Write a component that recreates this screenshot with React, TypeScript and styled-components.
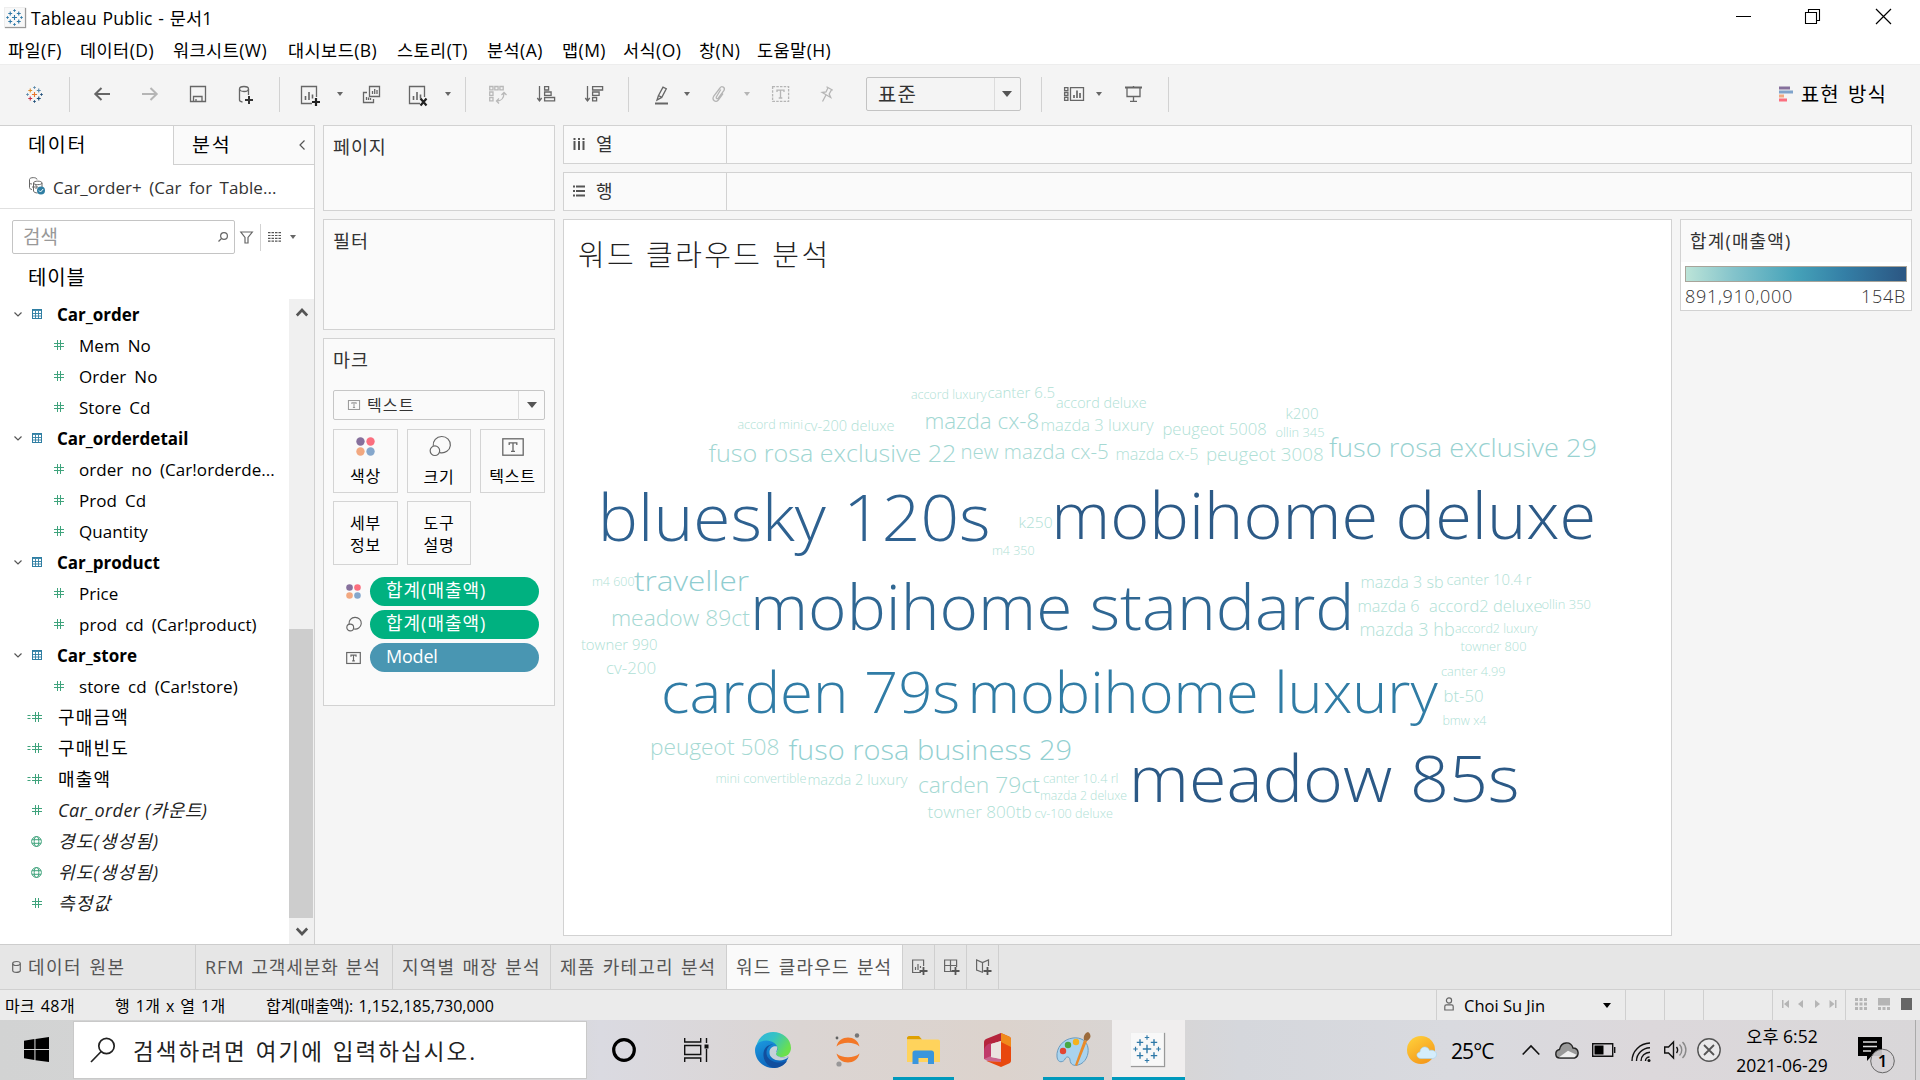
import React from 'react';
import styled, { createGlobalStyle, css } from 'styled-components';

const GlobalStyle = createGlobalStyle`
  *, *::before, *::after { box-sizing: border-box; }
  html, body { margin: 0; padding: 0; }
  body {
    width: 1920px;
    height: 1080px;
    overflow: hidden;
    background: #f5f5f5;
    color: #000;
    font-family: 'Open Sans', 'Noto Sans CJK KR', sans-serif;
    font-size: 17px;
    line-height: 1;
  }
`;

const Shell = styled.div`
  width: 1920px;
  height: 1080px;
  display: flex;
  flex-direction: column;
  overflow: hidden;
  background: #f5f5f5;
  white-space: nowrap;
`;

const Glyph = styled.svg<{ $ml?: number; $mt?: number }>`
  display: block;
  flex: none;
  margin-left: ${(p) => p.$ml ?? 0}px;
  margin-top: ${(p) => p.$mt ?? 0}px;
  overflow: visible;
`;

/* ---------- title bar and menu ---------- */

const TitleBar = styled.header`
  height: 34px;
  display: flex;
  align-items: center;
  padding: 0 29px 0 4px;
  background: #fff;
`;

const AppBadge = styled.span<{ $w: number; $h: number }>`
  width: ${(p) => p.$w}px;
  height: ${(p) => p.$h}px;
  flex: none;
  display: flex;
  align-items: center;
  justify-content: center;
  background: #f8f8f8;
  box-shadow: 1px 1px 1px #999;
  border: 1px solid #eee;
`;

const TitleText = styled.span`
  margin: 3px auto 0 6px;
  font-size: 17.5px;
  letter-spacing: 0.15px;
  word-spacing: 1px;
`;

const MenuBar = styled.nav`
  height: 30px;
  display: flex;
  align-items: center;
  gap: 17px;
  padding: 2px 0 0 8px;
  background: #fff;
`;

const MenuItem = styled.span<{ $w: number }>`
  width: ${(p) => p.$w}px;
  font-size: 17.5px;
  letter-spacing: 0.45px;
  line-height: 24px;
`;

/* ---------- toolbar ---------- */

const Toolbar = styled.div`
  height: 61px;
  flex: none;
  display: flex;
  align-items: center;
  padding: 0 33px 2px 26px;
  background: #f4f4f4;
  border-top: 1px solid #ededed;
`;

const ToolSep = styled.span<{ $ml: number; $h?: number }>`
  width: 1px;
  height: ${(p) => p.$h ?? 35}px;
  margin-left: ${(p) => p.$ml}px;
  background: #d2d2d2;
`;

const Caret = styled.span<{ $ml?: number; $s?: number; $c?: string }>`
  width: 0;
  height: 0;
  flex: none;
  margin-left: ${(p) => p.$ml ?? 0}px;
  border: ${(p) => p.$s ?? 3}px solid transparent;
  border-top-color: ${(p) => p.$c ?? '#666'};
  border-top-width: ${(p) => (p.$s ?? 3) + 1}px;
  border-bottom: 0;
`;

const FitSelect = styled.div`
  width: 155px;
  height: 34px;
  margin-left: 33px;
  display: flex;
  align-items: center;
  border: 1px solid #c3c3c3;
  border-radius: 2px;
  color: #333;
  font-size: 20px;
  letter-spacing: 1.2px;
  span:first-child { width: 128px; padding: 1px 0 0 11px; line-height: 31px; border-right: 1px solid #dcdcdc; }
`;

const ShowMe = styled.div`
  margin-left: auto;
  padding-top: 2px;
  display: flex;
  align-items: center;
  gap: 8px;
  font-size: 20px;
  letter-spacing: 1.1px;
  word-spacing: 2px;
`;

/* ---------- work area ---------- */

const Work = styled.main`
  height: 819px;
  display: flex;
`;

const DataPane = styled.aside`
  width: 315px;
  height: 819px;
  display: flex;
  flex-direction: column;
  background: #fff;
  border-top: 1px solid #d0d0d0;
  border-right: 1px solid #d0d0d0;
`;

const PaneTabs = styled.div`
  height: 39px;
  flex: none;
  display: flex;
  font-size: 19.5px;
  letter-spacing: 1.8px;
`;

const PaneTab = styled.div<{ $active?: boolean }>`
  display: flex;
  align-items: center;
  padding-bottom: 1px;
  ${(p) =>
    p.$active
      ? css`
          width: 173px;
          padding-left: 28px;
        `
      : css`
          flex: 1;
          padding-left: 18px;
          padding-right: 9px;
          justify-content: space-between;
          background: #fafafa;
          border-left: 1px solid #d0d0d0;
          border-bottom: 1px solid #d0d0d0;
        `}
`;

const Source = styled.div`
  height: 44px;
  flex: none;
  display: flex;
  align-items: center;
  gap: 8px;
  padding: 1px 0 0 29px;
  color: #333;
  border-bottom: 1px solid #e0e0e0;
  letter-spacing: 0.05px;
  word-spacing: 3px;
`;

const SearchRow = styled.div`
  height: 56px;
  flex: none;
  display: flex;
  align-items: center;
  padding-left: 12px;
`;

const SearchBox = styled.div`
  width: 223px;
  height: 34px;
  display: flex;
  align-items: center;
  justify-content: space-between;
  padding: 0 6px 0 10px;
  border: 1px solid #c4c4c4;
  border-radius: 2px;
  color: #999;
  font-size: 19px;
`;

const TablesTitle = styled.div`
  height: 34px;
  flex: none;
  padding: 3px 0 0 28px;
  font-size: 20px;
  line-height: 20px;
  letter-spacing: 0.9px;
`;

const TreeArea = styled.div`
  flex: 1;
  display: flex;
  min-height: 0;
`;

const Tree = styled.div`
  width: 289px;
`;

const Row = styled.div<{ $bold?: boolean; $italic?: boolean; $hangul?: boolean }>`
  height: 31px;
  display: flex;
  align-items: center;
  font-size: ${(p) => (p.$hangul ? 18 : 17)}px;
  font-weight: ${(p) => (p.$bold ? 700 : 400)};
  font-style: ${(p) => (p.$italic ? 'italic' : 'normal')};
  color: ${(p) => (p.$italic ? '#222' : '#000')};
  letter-spacing: ${(p) => (p.$hangul ? '1.2px' : p.$bold ? '0' : '0.05px')};
  word-spacing: ${(p) => (p.$hangul ? 0 : 3.5)}px;
`;

const RowIcons = styled.span<{ $w: number }>`
  width: ${(p) => p.$w}px;
  display: flex;
  align-items: center;
  justify-content: flex-end;
  margin-top: -1px;
`;

const RowText = styled.span<{ $pl: number; $up?: boolean; $tight?: boolean }>`
  padding-left: ${(p) => p.$pl}px;
  padding-bottom: ${(p) => (p.$up ? 2 : 0)}px;
  letter-spacing: ${(p) => (p.$tight ? '0.4px' : 'inherit')};
`;

const ScrollBar = styled.div`
  width: 25px;
  display: flex;
  flex-direction: column;
  align-items: center;
  padding: 9px 0 8px;
  background: #f0f0f0;
  svg:last-child { margin-top: auto; }
`;

const Thumb = styled.span`
  width: 24px;
  height: 289px;
  margin: 312px 1px 0 0;
  background: #cdcdcd;
`;

/* ---------- cards ---------- */

const Cards = styled.section`
  width: 232px;
  margin-left: 8px;
  display: flex;
  flex-direction: column;
  gap: 8px;
`;

const Card = styled.div<{ $h: number }>`
  height: ${(p) => p.$h}px;
  padding: 9px 9px 0;
  background: #fafafa;
  border: 1px solid #d2d2d2;
  color: #333;
`;

const CardTitle = styled.div`
  height: 23px;
  font-size: 18.5px;
  line-height: 23px;
  letter-spacing: 0.9px;
`;

const MarkSelect = styled.div`
  height: 30px;
  margin-top: 19px;
  display: flex;
  align-items: center;
  border: 1px solid #c6c6c6;
  border-radius: 2px;
  font-size: 16px;
  letter-spacing: 1.1px;
  span { flex: 1; padding-left: 7px; line-height: 29px; border-right: 1px solid #dcdcdc; }
`;

const MarkGrid = styled.div`
  display: grid;
  grid-template-columns: 65px 64px 65px;
  gap: 8px 9px;
  margin-top: 9px;
`;

const MarkButton = styled.div`
  height: 64px;
  display: flex;
  flex-direction: column;
  align-items: center;
  justify-content: center;
  gap: 9px;
  padding-top: 2px;
  border: 1px solid #d4d4d4;
  color: #000;
  font-size: 16px;
  letter-spacing: 0.7px;
  line-height: 22px;
  text-align: center;
  white-space: pre-line;
`;

const Pills = styled.div`
  display: flex;
  flex-direction: column;
  gap: 4px;
  margin-top: 12px;
  padding-left: 13px;
`;

const PillRow = styled.div`
  display: flex;
  align-items: center;
  height: 29px;
  gap: 9px;
`;

const Pill = styled.div<{ $color: string; $track: number }>`
  width: 169px;
  height: 29px;
  border-radius: 15px;
  padding-left: 16px;
  background: ${(p) => p.$color};
  color: #fff;
  font-size: 18px;
  line-height: 26px;
  letter-spacing: ${(p) => p.$track}px;
`;

/* ---------- shelves and view ---------- */

const Sheet = styled.section`
  width: 1349px;
  margin-left: 8px;
  display: flex;
  flex-direction: column;
  gap: 8px;
`;

const Shelf = styled.div`
  height: 39px;
  flex: none;
  background: #fafafa;
  border: 1px solid #d2d2d2;
  display: flex;
`;

const ShelfLabel = styled.div`
  width: 163px;
  display: flex;
  align-items: center;
  gap: 11px;
  padding: 0 0 1px 9px;
  border-right: 1px solid #d2d2d2;
  color: #333;
  font-size: 18px;
`;

const ViewRow = styled.div`
  display: flex;
  gap: 8px;
`;

const View = styled.div`
  width: 1109px;
  height: 717px;
  background: #fff;
  border: 1px solid #d2d2d2;
`;

const ViewTitle = styled.h1`
  height: 70px;
  margin: 0;
  padding: 17px 0 0 14px;
  font-size: 29px;
  font-weight: 300;
  line-height: 36px;
  letter-spacing: 2.4px;
  color: #222;
`;

const Cloud = styled.svg`
  display: block;
  font-family: 'Open Sans', 'Noto Sans', sans-serif;
  font-weight: 300;
`;

const Legend = styled.div`
  width: 232px;
  height: 92px;
  background: #fff;
  border: 1px solid #d2d2d2;
  color: #333;
`;

const LegendTitle = styled.div`
  height: 42px;
  padding-left: 9px;
  background: #fafafa;
  font-size: 18px;
  line-height: 43px;
  letter-spacing: 1.15px;
`;

const Ramp = styled.div`
  height: 16px;
  margin: 4px 4px 0;
  border: 1px solid #a8a49a;
  background: linear-gradient(90deg, #bce4d8 0%, #83c3cb 22%, #45a2b9 50%, #347fa6 72%, #2c5985 98%);
`;

const RampLabels = styled.div`
  display: flex;
  justify-content: space-between;
  padding: 4px 5px 0 4px;
  font-weight: 300;
  font-size: 18px;
  line-height: 20px;
  letter-spacing: 0.7px;
`;

/* ---------- sheet tabs and status ---------- */

const SheetTabs = styled.div`
  height: 46px;
  flex: none;
  display: flex;
  background: #e6e6e6;
  border-top: 1px solid #cdcdcd;
  border-bottom: 1px solid #d0d0d0;
`;

const SheetTab = styled.div<{ $w: number; $active?: boolean; $pl?: number; $track?: number }>`
  width: ${(p) => p.$w}px;
  display: flex;
  align-items: center;
  padding: 0 0 1px ${(p) => p.$pl ?? 9}px;
  gap: 7px;
  border-right: 1px solid #cfcfcf;
  background: ${(p) => (p.$active ? '#fafafa' : 'transparent')};
  color: #555;
  font-size: 18px;
  letter-spacing: ${(p) => p.$track ?? 1.15}px;
  word-spacing: 1.5px;
`;

const StatusBar = styled.div`
  height: 30px;
  flex: none;
  display: flex;
  align-items: center;
  padding-left: 5px;
  background: #ebebeb;
  font-size: 16px;
`;

const Status = styled.span<{ $w: number; $track?: number }>`
  width: ${(p) => p.$w}px;
  padding-top: 2px;
  line-height: 22px;
  word-spacing: 1px;
  letter-spacing: ${(p) => p.$track ?? 0}px;
`;

const StatusCell = styled.div<{ $w: number; $pl?: number }>`
  width: ${(p) => p.$w}px;
  height: 30px;
  display: flex;
  align-items: center;
  padding-left: ${(p) => p.$pl ?? 0}px;
  border-left: 1px solid #cfcfcf;
`;

const UserName = styled.span`
  width: 139px;
  margin-left: 10px;
  padding-top: 2px;
  font-size: 16.5px;
`;

/* ---------- taskbar ---------- */

const Taskbar = styled.footer`
  height: 60px;
  flex: none;
  display: flex;
  align-items: center;
  background: linear-gradient(90deg, #d2d3d3 0, #d8d8d9 560px, #dadae1 600px, #dbd5d3 800px, #dcd3cd 1000px, #d8d5d4 1150px, #d5d7dc 1240px, #d9dadf 1450px, #dcd8db 1650px, #d9d7d9 1920px);
`;

const StartButton = styled.div`
  width: 73px;
  padding-left: 24px;
`;

const TaskSearch = styled.div`
  width: 514px;
  height: 58px;
  display: flex;
  align-items: center;
  gap: 17px;
  padding-left: 16px;
  background: #fff;
  border: 1px solid #c9c9c9;
  color: #222;
  font-size: 22.5px;
  letter-spacing: 2.05px;
  word-spacing: 1px;
  span { padding-top: 4px; }
`;

const TaskButton = styled.div<{ $w: number; $ml?: number; $open?: boolean; $active?: boolean; $pt?: number }>`
  width: ${(p) => p.$w}px;
  height: 60px;
  margin-left: ${(p) => p.$ml ?? 0}px;
  display: flex;
  align-items: center;
  justify-content: center;
  background: ${(p) => (p.$active ? '#f0eeee' : 'transparent')};
  border-bottom: 3px solid ${(p) => (p.$open || p.$active ? '#0099bc' : 'transparent')};
  padding-top: ${(p) => p.$pt ?? 3}px;
  padding-right: ${(p) => (p.$active ? 3 : 0)}px;
`;

const Weather = styled.div`
  display: flex;
  align-items: center;
  gap: 14px;
  margin-left: 222px;
  font-size: 21px;
  letter-spacing: -0.9px;
  span { width: 56px; padding-top: 3px; }
`;

const Clock = styled.div`
  width: 100px;
  margin-left: 11px;
  padding-top: 1px;
  display: flex;
  flex-direction: column;
  align-items: center;
  font-size: 17.5px;
  line-height: 29px;
  letter-spacing: 0;
`;

const DesktopEdge = styled.span`
  width: 1px;
  height: 60px;
  margin: 0 4px 0 auto;
  background: #aaa;
`;

/* ---------- icons ---------- */

const plus = (x: number, y: number, r: number) => `M${x - r} ${y}h${2 * r}M${x} ${y - r}v${2 * r}`;

function TableauMark({ size, colors, weight = 1.3 }: { size: number; colors?: string[]; weight?: number }) {
  const c = colors ?? ['#2f79a8', '#2f79a8', '#2f79a8', '#2f79a8', '#2f79a8'];
  return (
    <Glyph width={size} height={size} viewBox="0 0 20 20" fill="none" strokeWidth={weight}>
      <path d={plus(10, 10, 3)} stroke={c[0]} />
      <path d={plus(5, 5.3, 2.3)} stroke={c[1]} />
      <path d={plus(15, 5.3, 2.3)} stroke={c[2]} />
      <path d={plus(5, 14.7, 2.3)} stroke={c[3]} />
      <path d={plus(15, 14.7, 2.3)} stroke={c[4]} />
      <path d={plus(10, 1.8, 1.6) + plus(1.8, 10, 1.6)} stroke={c[2]} strokeWidth={weight * 0.8} />
      <path d={plus(10, 18.2, 1.6) + plus(18.2, 10, 1.6)} stroke={c[4]} strokeWidth={weight * 0.8} />
    </Glyph>
  );
}

function Hash({ calc }: { calc?: boolean }) {
  return (
    <Glyph width={calc ? 15 : 10} height={10} viewBox={calc ? '-5 0 15 10' : '0 0 10 10'} fill="none" stroke="#3fa37c" strokeWidth={1}>
      <path d="M3.5 0v10M6.5 0v10M0 3.5h10M0 6.5h10" />
      {calc && <path d="M-4.5 3.5h3M-4.5 6.5h3" />}
    </Glyph>
  );
}

function Globe() {
  return (
    <Glyph width={11} height={11} viewBox="0 0 11 11" fill="none" stroke="#3fa37c">
      <circle cx={5.5} cy={5.5} r={4.9} />
      <ellipse cx={5.5} cy={5.5} rx={2.3} ry={4.9} />
      <path d="M1 3.7h9M1 7.3h9" />
    </Glyph>
  );
}

function TableIcon() {
  return (
    <Glyph $ml={10} width={10} height={10} viewBox="0 0 10 10" fill="none" stroke="#2f7ea3">
      <rect x={0.5} y={0.5} width={9} height={9} />
      <path d="M0 1.5h10M0 4.5h10M0 7h10M3.5 2v8M6.5 2v8" strokeWidth={0.9} />
    </Glyph>
  );
}

function Dots({ w }: { w: number }) {
  return (
    <Glyph width={w} height={w} viewBox="0 0 20 20">
      <circle cx={4.7} cy={4.7} r={4.4} fill="#86709c" />
      <circle cx={15.3} cy={4.7} r={4.4} fill="#fb6f7f" />
      <circle cx={4.7} cy={15.3} r={4.4} fill="#f2a880" />
      <circle cx={15.3} cy={15.3} r={4.4} fill="#85a7cc" />
    </Glyph>
  );
}

function SizeIcon({ w }: { w: number }) {
  return (
    <Glyph width={w} height={w} viewBox="0 0 22 22" fill="none" stroke="#666" strokeWidth={22 / w + 0.2}>
      <path d="M4.5 10.3A9 8.6 0 1 1 11.5 17.5" />
      <circle cx={6.2} cy={15.4} r={5} />
    </Glyph>
  );
}

function TextIcon({ w, h, c = '#666' }: { w: number; h: number; c?: string }) {
  return (
    <Glyph width={w} height={h} viewBox="0 0 22 18" fill="none" stroke={c} strokeWidth={22 / w + 0.3}>
      <rect x={0.8} y={0.8} width={20.4} height={16.4} />
      <path d="M7.2 7V4.8h7.6V7M11 4.8v8.6M9 13.4h4" />
    </Glyph>
  );
}

const Bars = ({ extra }: { extra: React.ReactNode }) => (
  <>
    <path d="M11 17.5H.5V.5h15V11" />
    <path d="M4.5 10v4M8 6v8M11.5 8.5v4" strokeWidth={1.6} />
    {extra}
  </>
);

/* ---------- data ---------- */

const menus: [string, number][] = [
  ['파일(F)', 55], ['데이터(D)', 76], ['워크시트(W)', 98], ['대시보드(B)', 92], ['스토리(T)', 73],
  ['분석(A)', 58], ['맵(M)', 44], ['서식(O)', 59], ['창(N)', 41], ['도움말(H)', 76],
];

type Node = { t: string; k: 'table' | 'field' | 'calc' | 'gen' | 'geo' };
const tree: Node[] = [
  { t: 'Car_order', k: 'table' },
  { t: 'Mem No', k: 'field' },
  { t: 'Order No', k: 'field' },
  { t: 'Store Cd', k: 'field' },
  { t: 'Car_orderdetail', k: 'table' },
  { t: 'order no (Car!orderde...', k: 'field' },
  { t: 'Prod Cd', k: 'field' },
  { t: 'Quantity', k: 'field' },
  { t: 'Car_product', k: 'table' },
  { t: 'Price', k: 'field' },
  { t: 'prod cd (Car!product)', k: 'field' },
  { t: 'Car_store', k: 'table' },
  { t: 'store cd (Car!store)', k: 'field' },
  { t: '구매금액', k: 'calc' },
  { t: '구매빈도', k: 'calc' },
  { t: '매출액', k: 'calc' },
  { t: 'Car_order (카운트)', k: 'gen' },
  { t: '경도(생성됨)', k: 'geo' },
  { t: '위도(생성됨)', k: 'geo' },
  { t: '측정값', k: 'gen' },
];

// label, left edge, right edge, baseline, font size, colour
type Word = [string, number, number, number, number, string];
const pale = '#b0dfd6';
const mint = '#a5d9d3';
const words: Word[] = [
  ['accord luxury', 911.5, 986, 399, 12, pale],
  ['canter 6.5', 988, 1054.5, 398.3, 15, pale],
  ['accord deluxe', 1056.5, 1146, 408.3, 14.5, pale],
  ['accord mini', 738, 802.5, 429.3, 12, pale],
  ['cv-200 deluxe', 804.5, 894, 431.3, 14.5, pale],
  ['mazda cx-8', 925, 1038.5, 429.3, 22, '#a2d8d3'],
  ['mazda 3 luxury', 1041, 1153, 431.3, 16, pale],
  ['peugeot 5008', 1163, 1266, 435, 16, pale],
  ['k200', 1286, 1318, 419.3, 15, pale],
  ['ollin 345', 1276, 1324, 437.3, 12.5, pale],
  ['fuso rosa exclusive 22', 709, 955.5, 462, 24, '#a0d6d2'],
  ['new mazda cx-5', 961, 1108, 459.3, 19.5, mint],
  ['mazda cx-5', 1116, 1198, 460.3, 16, pale],
  ['peugeot 3008', 1206.5, 1323, 461, 18, pale],
  ['fuso rosa exclusive 29', 1329.5, 1596, 457, 25.5, '#98d2d1'],
  ['bluesky 120s', 603, 988, 541, 64, '#2e6190'],
  ['mobihome deluxe', 1056.5, 1593.5, 539, 65, '#2c5a87'],
  ['k250', 1019, 1052, 528, 15, pale],
  ['m4 350', 992.5, 1034, 555, 12.5, pale],
  ['m4 600', 592.5, 634, 586, 12.5, pale],
  ['traveller', 634.5, 748, 590.7, 27, '#8fcdd0'],
  ['mobihome standard', 755, 1352, 629.7, 63, '#2f6793'],
  ['mazda 3 sb', 1361, 1443, 588, 16, pale],
  ['canter 10.4 r', 1447, 1531, 585, 14.5, pale],
  ['mazda 6', 1358, 1419, 611.7, 16, pale],
  ['accord2 deluxe', 1429.5, 1542, 611.7, 15.5, pale],
  ['ollin 350', 1542, 1590.5, 609.3, 12.5, pale],
  ['mazda 3 hb', 1360, 1454, 636, 18.5, pale],
  ['accord2 luxury', 1455.5, 1537, 633.3, 12.5, pale],
  ['towner 800', 1461, 1526, 651.3, 12.5, pale],
  ['meadow 89ct', 611.5, 749, 626, 21.5, mint],
  ['towner 990', 581.5, 657, 650, 14.5, pale],
  ['cv-200', 606.5, 655.5, 674, 15.5, pale],
  ['carden 79s', 665.5, 958, 713, 57, '#307ca6'],
  ['mobihome luxury', 972, 1435.5, 713, 57, '#307ca5'],
  ['canter 4.99', 1441.5, 1505, 676.3, 12.5, pale],
  ['bt-50', 1444, 1483, 702.3, 15.5, pale],
  ['bmw x4', 1443, 1486, 725.3, 12.5, pale],
  ['peugeot 508', 650.5, 778.5, 754.7, 22, mint],
  ['fuso rosa business 29', 789, 1071, 760, 27, '#93d0d1'],
  ['mini convertible', 716, 806, 783.3, 12, pale],
  ['mazda 2 luxury', 808, 907, 785, 14.5, pale],
  ['carden 79ct', 918.5, 1039, 793, 21.5, mint],
  ['canter 10.4 rl', 1043.5, 1118, 783.3, 12.5, pale],
  ['mazda 2 deluxe', 1040.5, 1126.5, 800.3, 12.5, pale],
  ['meadow 85s', 1134, 1517, 802, 65, '#2b5986'],
  ['towner 800tb', 928, 1031, 818, 15.5, pale],
  ['cv-100 deluxe', 1035, 1112.5, 818, 12.5, pale],
];

/* ---------- sections ---------- */

function MainToolbar() {
  const g = { fill: 'none', stroke: '#666', strokeWidth: 1.3 };
  return (
    <Toolbar>
      <TableauMark size={17} colors={['#e8762d', '#e0902c', '#5a87a8', '#c83048', '#1f4e79']} />
      <ToolSep $ml={26} />
      <Glyph $ml={24} width={16} height={14} {...g} strokeWidth={2}><path d="M16 7H1M7.5 1L1.3 7l6.2 6" /></Glyph>
      <Glyph $ml={32} width={16} height={14} {...g} stroke="#b5b5b5" strokeWidth={2}><path d="M0 7h15M8.5 1l6.2 6-6.2 6" /></Glyph>
      <Glyph $ml={32} width={16} height={16} {...g}><path d="M.5.5h15v15H.5zM3.5 15.5v-5h8.500v5M6 13v2.500" /></Glyph>
      <Glyph $ml={33} $mt={2} width={15} height={18} {...g}>
        <ellipse cx={5} cy={3} rx={4.5} ry={2.5} /><path d="M.5 3v11c0 1 1.500 1.800 3 2M9.500 3v6" />
        <path d="M10 10v8M6 14h8" stroke="#333" strokeWidth={2} />
      </Glyph>
      <ToolSep $ml={25} />
      <Glyph $ml={21} $mt={2} width={19} height={19} {...g}><Bars extra={<path d="M15 12v8M11 16h8" stroke="#222" strokeWidth={2.200} />} /></Glyph>
      <Caret $ml={17} />
      <Glyph $ml={20} width={17} height={17} {...g}><path d="M6.500.5h10v10h-10zM4 6.500H.5v10h10V13M9.500 5v3M11.700 3v5M14 4v4M3.500 11v3M5.500 11.500v2.500M7.500 12v2" /></Glyph>
      <Glyph $ml={29} $mt={2} width={19} height={19} {...g}><Bars extra={<path d="M11.500 12.500l6 7M17.500 12.500l-6 7" stroke="#222" strokeWidth={2.200} />} /></Glyph>
      <Caret $ml={17} />
      <ToolSep $ml={14} />
      <Glyph $ml={23} width={17} height={18} {...g} stroke="#b8b8b8">
        <path d="M.7 1.500h3.300v3.300H.7zM5.800 1.500h3.300v3.300H5.800zM10.900 1.500h3.300v3.300h-3.300zM.7 7h3.300v3.300H.7zM.7 12.500h3.300v3.300H.7z" />
        <path d="M15 8c0 5-3 8-7 8M12.500 10L15 7.500 17.500 10M10 13.500L7.500 16l2.500 2.500" />
      </Glyph>
      <Glyph $ml={31} width={18} height={16} {...g}>
        <path d="M2.500 0v15M.3 12l2.200 3 2.200-3M7.600.7h4v3.300h-4zM7.600 6h6.500v3.300H7.600zM7.600 11.500h10v3.300h-10z" />
      </Glyph>
      <Glyph $ml={30} width={18} height={16} {...g}>
        <path d="M2.500 0v15M.3 12l2.200 3 2.200-3M7.600.7h10v3.300h-10zM7.600 6h6.500v3.300H7.600zM7.600 11.500h4v3.300h-4z" />
      </Glyph>
      <ToolSep $ml={25} />
      <Glyph $ml={26} $mt={2} width={13} height={19} {...g}>
        <path d="M3.500 9.500L8 1.200l3.300 1.500-4.500 8.600zM3.500 9.500l-1.500 4.500 4.700-2.600" /><path d="M0 17.500h13" strokeWidth={2} />
      </Glyph>
      <Caret $ml={16} />
      <Glyph $ml={22} width={13} height={16} {...g} stroke="#b5b5b5">
        <path d="M8.800 3.500L4.300 11c-.6 1.500 1.300 2.300 2 1L12 4.500C13.500 1.500 9.800-.8 8 2L1.800 10c-2.500 4 2.200 7.200 4.500 4L11 7.500" />
      </Glyph>
      <Caret $ml={19} $c="#b5b5b5" />
      <Glyph $ml={22} width={17} height={16} {...g} stroke="#b5b5b5">
        <rect x={0.6} y={0.6} width={16} height={14.800} strokeDasharray="2.500 1.200" /><path d="M5 6V4.200h7V6M8.500 4.200V12M6.700 12h3.600" />
      </Glyph>
      <Glyph $ml={32} width={12} height={16} {...g} stroke="#b5b5b5">
        <path d="M5.500.8l6.300 3.500M7 1.700L5 6 1.200 6.500l8.500 5-1.500-3.500 2.400-4.400M5 9l-3.500 6.500" />
      </Glyph>
      <FitSelect><span>표준</span><Caret $ml={7} $s={5} $c="#555" /></FitSelect>
      <ToolSep $ml={20} />
      <Glyph $ml={22} width={20} height={14} {...g}>
        <path d="M.6.6h3.300v3H.6zM.6 5.500h3.300v3H.6zM.6 10.400h3.300v3H.6zM6.500.6h13v12.800h-13z" /><path d="M10 8v3M13 3.500V11M16 6v5" strokeWidth={1.700} />
      </Glyph>
      <Caret $ml={12} />
      <Glyph $ml={23} width={17} height={16} {...g}>
        <path d="M0 1.500h17" strokeWidth={2} /><path d="M2 2v8.500h13V2M8.500 10.500V15M5 15.300h7M8.500 0v1" />
      </Glyph>
      <ToolSep $ml={26} />
      <ShowMe>
        <Glyph $mt={-2} width={14} height={16}>
          <path d="M0 .5h11v3H0z" fill="#86709c" /><path d="M0 4.500h14v3H0z" fill="#7fa3cb" /><path d="M0 8.500h5v3H0z" fill="#f2a880" /><path d="M0 12.500h8v3H0z" fill="#fb6f7f" />
        </Glyph>
        <span>표현 방식</span>
      </ShowMe>
    </Toolbar>
  );
}

function TreeRow({ t, k }: Node) {
  if (k === 'table') {
    return (
      <Row $bold>
        <RowIcons $w={42}>
          <Glyph width={8} height={5} fill="none" stroke="#555" strokeWidth={1.2}><path d="M.5.5L4 4 7.500.5" /></Glyph>
          <TableIcon />
        </RowIcons>
        <RowText $pl={15}>{t}</RowText>
      </Row>
    );
  }
  const field = k === 'field';
  return (
    <Row $italic={k === 'gen' || k === 'geo'} $hangul={!field}>
      <RowIcons $w={field ? 64 : 42}>{k === 'geo' ? <Globe /> : <Hash calc={k === 'calc'} />}</RowIcons>
      <RowText $pl={field ? 15 : 16} $up={!field} $tight={t.startsWith('Car_')}>{t}</RowText>
    </Row>
  );
}

function LeftPane() {
  return (
    <DataPane>
      <PaneTabs>
        <PaneTab $active>데이터</PaneTab>
        <PaneTab>
          <span>분석</span>
          <Glyph width={6} height={10} fill="none" stroke="#555" strokeWidth={1.2}><path d="M5.500.5L1 5l4.500 4.500" /></Glyph>
        </PaneTab>
      </PaneTabs>
      <Source>
        <Glyph $mt={-3} width={16} height={18} fill="none" stroke="#666">
          <path d="M.5 2.500v8c0 1 1 1.800 2.500 2M.5 2.500C.5 0 8 0 8 2.500M.5 5.500c0 1 1 1.500 2.500 1.500" />
          <path d="M4.500 6v8c0 1 2 2 4 2M4.500 6c0-2.500 8.500-2.500 8.500 0v4M4.500 6c0 2.200 8.500 2.200 8.500 0M3 10h5M6.500 8L8.500 10l-2 2" />
          <circle cx={12} cy={13.500} r={4} fill="#2f7ea3" stroke="none" />
          <path d="M10 13.500l1.500 1.500 2.700-3" stroke="#fff" />
        </Glyph>
        <span>Car_order+ (Car for Table...</span>
      </Source>
      <SearchRow>
        <SearchBox>
          <span>검색</span>
          <Glyph width={10} height={10} fill="none" stroke="#666" strokeWidth={1.2}><circle cx={6} cy={4} r={3.400} /><path d="M3.500 6.500L.5 9.500" /></Glyph>
        </SearchBox>
        <Glyph $ml={5} width={13} height={13} fill="none" stroke="#666" strokeWidth={1.2}><path d="M.8 1h11.500L8 6.500v5.500H5V6.500z" /></Glyph>
        <ToolSep $ml={7} $h={27} />
        <Glyph $ml={7} $mt={-1} width={13} height={10} stroke="#555" strokeWidth={1.200} strokeDasharray="2.500 1"><path d="M0 .7h13M0 3.500h13M0 6.300h13M0 9.200h13" /></Glyph>
        <Caret $ml={9} $s={3.5} />
      </SearchRow>
      <TablesTitle>테이블</TablesTitle>
      <TreeArea>
        <Tree>{tree.map((n) => <TreeRow key={n.t} {...n} />)}</Tree>
        <ScrollBar>
          <Glyph width={12} height={9} fill="none" stroke="#555" strokeWidth={2.600}><path d="M.8 7.500L6 2l5.200 5.500" /></Glyph>
          <Thumb />
          <Glyph width={12} height={9} fill="none" stroke="#555" strokeWidth={2.600}><path d="M.8 1.500L6 7l5.200-5.500" /></Glyph>
        </ScrollBar>
      </TreeArea>
    </DataPane>
  );
}

function CardColumn() {
  return (
    <Cards>
      <Card $h={86}><CardTitle>페이지</CardTitle></Card>
      <Card $h={111}><CardTitle>필터</CardTitle></Card>
      <Card $h={368}>
        <CardTitle>마크</CardTitle>
        <MarkSelect>
          <Glyph $ml={14} width={12} height={10} viewBox="0 0 22 18" fill="none" stroke="#999" strokeWidth={1.9}>
            <rect x={0.8} y={0.8} width={20.4} height={16.4} /><path d="M7.200 7V4.800h7.600V7M11 4.800v8.600M9 13.400h4" />
          </Glyph>
          <span>텍스트</span>
          <Glyph $ml={8} width={17} height={6}><path d="M0 0h10L5 6z" fill="#555" /></Glyph>
        </MarkSelect>
        <MarkGrid>
          <MarkButton><Dots w={19} />색상</MarkButton>
          <MarkButton><SizeIcon w={21} />크기</MarkButton>
          <MarkButton><TextIcon w={22} h={18} />텍스트</MarkButton>
          <MarkButton>{'세부\n정보'}</MarkButton>
          <MarkButton>{'도구\n설명'}</MarkButton>
        </MarkGrid>
        <Pills>
          <PillRow><Dots w={15} /><Pill $color="#00b180" $track={1}>합계(매출액)</Pill></PillRow>
          <PillRow><SizeIcon w={15} /><Pill $color="#00b180" $track={1}>합계(매출액)</Pill></PillRow>
          <PillRow><TextIcon w={15} h={12} /><Pill $color="#4996b2" $track={-0.2}>Model</Pill></PillRow>
        </Pills>
      </Card>
    </Cards>
  );
}

function WordCloud() {
  return (
    <Cloud width={1107} height={645} viewBox="564 290 1107 645">
      {words.map(([label, left, right, base, size, color]) => {
        const bearing = size > 50 ? size * 0.08 : 0.6;
        return (
          <text
            key={label}
            x={left - bearing}
            y={base}
            fontSize={size}
            fill={color}
            textLength={right - left + bearing + size * 0.04}
            lengthAdjust="spacingAndGlyphs"
          >
            {label}
          </text>
        );
      })}
    </Cloud>
  );
}

function SheetArea() {
  return (
    <Sheet>
      <Shelf>
        <ShelfLabel>
          <Glyph width={12} height={12} fill="#555"><path d="M.5 0h2v2h-2zM.5 3h2v9h-2zM5 0h2v2H5zM5 3h2v9H5zM9.500 0h2v2h-2zM9.500 3h2v9h-2z" /></Glyph>
          열
        </ShelfLabel>
      </Shelf>
      <Shelf>
        <ShelfLabel>
          <Glyph width={12} height={12} fill="#555"><path d="M0 .5h2v2H0zM3 .5h9v2H3zM0 5h2v2H0zM3 5h9v2H3zM0 9.500h2v2H0zM3 9.500h9v2H3z" /></Glyph>
          행
        </ShelfLabel>
      </Shelf>
      <ViewRow>
        <View>
          <ViewTitle>워드 클라우드 분석</ViewTitle>
          <WordCloud />
        </View>
        <Legend>
          <LegendTitle>합계(매출액)</LegendTitle>
          <Ramp />
          <RampLabels><span>891,910,000</span><span>154B</span></RampLabels>
        </Legend>
      </ViewRow>
    </Sheet>
  );
}

function Bottom() {
  const s = { fill: 'none', stroke: '#666', strokeWidth: 1.2 };
  const add = <path d="M11.500 8v8M7.500 12h8" strokeWidth={1.800} stroke="#555" />;
  return (
    <>
      <SheetTabs>
        <SheetTab $w={196} $pl={12} $track={1.4}>
          <Glyph width={9} height={12} {...s}><ellipse cx={4.500} cy={2.500} rx={3.800} ry={2} /><path d="M.7 2.500v7c0 2.500 7.600 2.500 7.600 0v-7" /></Glyph>
          데이터 원본
        </SheetTab>
        <SheetTab $w={197} $track={0.9}>RFM 고객세분화 분석</SheetTab>
        <SheetTab $w={158}>지역별 매장 분석</SheetTab>
        <SheetTab $w={176}>제품 카테고리 분석</SheetTab>
        <SheetTab $w={176} $active>워드 클라우드 분석</SheetTab>
        <SheetTab $w={32}><Glyph width={16} height={16} {...s}><path d="M9 13.500H.6V1h11v6M3.500 8v3M6 5v6M8.500 7v2" />{add}</Glyph></SheetTab>
        <SheetTab $w={32}><Glyph width={16} height={16} {...s}><path d="M8 12.500H.6V1h12v7M.6 6.500h12M6.500 1v11.500" />{add}</Glyph></SheetTab>
        <SheetTab $w={32}><Glyph width={16} height={16} {...s}><path d="M7 13.500L.6 11V1l5.900 2.500L12.500 1v6M6.500 3.500v10" />{add}</Glyph></SheetTab>
      </SheetTabs>
      <StatusBar>
        <Status $w={110} $track={0.4}>마크 48개</Status>
        <Status $w={151} $track={0.4}>행 1개 x 열 1개</Status>
        <Status $w={1170}>합계(매출액): 1,152,185,730,000</Status>
        <StatusCell $w={189} $pl={7}>
          <Glyph width={10} height={14} $mt={-2} {...s}><circle cx={5} cy={3.500} r={2.600} /><path d="M.8 13V9.500c0-1 .6-1.700 1.500-1.700h5.400c.9 0 1.500.7 1.500 1.700V13z" /></Glyph>
          <UserName>Choi Su Jin</UserName>
          <Caret $s={4} $c="#000" />
        </StatusCell>
        <StatusCell $w={39} />
        <StatusCell $w={39} />
        <StatusCell $w={69} />
        <StatusCell $w={73} $pl={9}>
          <Glyph $mt={-2} width={55} height={8} fill="#b5b5b5"><path d="M0 0h1.500v8H0zM7 0v8L2 4zM21 0v8l-5-4zM33 0v8l5-4zM47.500 0v8l5-4zM53 0h1.500v8H53z" /></Glyph>
        </StatusCell>
        <StatusCell $w={75} $pl={9}>
          <Glyph $mt={-2} width={57} height={12} fill="#b5b5b5">
            <path d="M0 0h3v3H0zM4.500 0h3v3h-3zM9 0h3v3H9zM0 4.500h3v3H0zM4.500 4.500h3v3h-3zM9 4.500h3v3H9zM0 9h3v3H0zM4.500 9h3v3h-3zM9 9h3v3H9z" />
            <path d="M23 0h12v7.500H23zM23 9h3v3h-3zM27.500 9h3v3h-3zM32 9h3v3h-3z" />
            <path d="M46 0h11v12H46z" fill="#666" />
          </Glyph>
        </StatusCell>
      </StatusBar>
    </>
  );
}

function WindowsTaskbar() {
  const k = { fill: 'none', stroke: '#111', strokeWidth: 1.4 };
  return (
    <Taskbar>
      <StartButton>
        <Glyph $mt={-1} width={25} height={25} viewBox="0 0 24 24"><path d="M0 3.500l10-1.500v9.500H0zM11 1.800L24 0v11.500H11zM0 12.500h10V22L0 20.500zM11 12.500h13V24l-13-1.800z" /></Glyph>
      </StartButton>
      <TaskSearch>
        <Glyph width={26} height={26} fill="none" stroke="#222" strokeWidth={1.7}><circle cx={16.500} cy={9} r={7.700} /><path d="M11.200 14.500L1 25" /></Glyph>
        <span>검색하려면 여기에 입력하십시오.</span>
      </TaskSearch>
      <TaskButton $w={72} $ml={1}><Glyph width={26} height={26} fill="none" stroke="#000" strokeWidth={3.200}><circle cx={13} cy={13} r={10.300} /></Glyph></TaskButton>
      <TaskButton $w={72}>
        <Glyph width={25} height={24} {...k}><path d="M.7 0v4h16V0M.7 24v-4h16v4M.7 7.500h16v9H.7zM22.500 0v5M22.500 11v13" /><path d="M20.500 6.500h4v4h-4z" fill="#111" stroke="none" /></Glyph>
      </TaskButton>
      <TaskButton $w={82} $pt={3}>
        <Glyph width={36} height={36} viewBox="0 0 36 36">
          <defs>
            <linearGradient id="edgeTop" x1="0" y1="0" x2="1" y2="0.5"><stop offset="0" stopColor="#2fb3e0" /><stop offset="0.5" stopColor="#35c3c4" /><stop offset="1" stopColor="#6be04c" /></linearGradient>
            <linearGradient id="edgeLow" x1="0" y1="0" x2="0.6" y2="1"><stop offset="0" stopColor="#1c9be0" /><stop offset="1" stopColor="#0b5fb8" /></linearGradient>
          </defs>
          <path d="M1 15C3 5 10 0 18 0c10 0 18 7 18 16 0 5-4 9-9 9-4 0-7-1.500-6-3.500 3-3 .5-9.500-6-9.500C9 12 3 13 1 15z" fill="url(#edgeTop)" />
          <path d="M0 18C0 12 5 8.500 11 8.500c7 0 12 4 11.500 9-.3 2-1.500 2.500-1.500 4 0 2 3 4 7 4 3 0 5-1 5.500-.5C31 32 25 36 18 36 8 36 0 28 0 18z" fill="url(#edgeLow)" />
          <path d="M11.500 21c0-5 3-8.500 7-8.500-3-.5-9 1-10 8.500-.8 7 4 14 11 15 5 0 10-3 12.500-7-9 4-20.500 0-20.500-8z" fill="#124f9e" />
          <path d="M22 14.500c1 3-1 4.500-1 7 0 2 3 4 7 4 3 0 5-1 5.500-.5C28 31 14 29 14.500 20c.2-3.500 3-6.500 7.500-5.500z" fill="#d9dbdc" opacity="0.9" />
        </Glyph>
      </TaskButton>
      <TaskButton $w={60} $ml={4}>
        <Glyph width={28} height={34} viewBox="0 0 28 34">
          <path d="M2.500 13.500C5 1.500 23 1.500 25.500 13.500 20 8.500 8 8.500 2.500 13.500zM2.500 20.500c2.500 12 20.500 12 23 0C20 25.500 8 25.500 2.500 20.500z" fill="#f37726" />
          <circle cx={23} cy={2.500} r={2.200} fill="#767677" /><circle cx={5} cy={31} r={2.600} fill="#989798" /><circle cx={3} cy={5} r={1.400} fill="#616262" />
        </Glyph>
      </TaskButton>
      <TaskButton $w={61} $ml={15} $open>
        <Glyph width={33} height={28} viewBox="0 0 33 28">
          <path d="M0 2c0-1 .8-2 2-2h10l3 3.500H0z" fill="#dfa000" /><path d="M0 3.500h31c1.200 0 2 .8 2 2V26H0z" fill="#ffd35c" />
          <path d="M5.500 28V17c0-1.500 1-2.500 2.500-2.500h16.500c1.500 0 2.500 1 2.500 2.500v11h-6v-6H11.500v6z" fill="#3a96dd" />
        </Glyph>
      </TaskButton>
      <TaskButton $w={60} $ml={13}>
        <Glyph width={27} height={34} viewBox="0 0 27 34">
          <path d="M17 0L2 6c-1.500.8-2 2-2 3.500V26l7-3V11l10-3z" fill="#b5243c" />
          <path d="M0 26l4.500 2.500L17 29v-3L7 24V10C3 11 0 14 0 18z" fill="#c4427a" opacity="0.75" />
          <path d="M17 0l8 3.500c1.500.7 2 1.500 2 3v21c0 1.500-.5 2.300-2 3L17 34 2.500 28 17 29z" fill="#e8480e" />
          <path d="M17 0l8 3.500c1.500.7 2 1.500 2 3V14L17 9z" fill="#f08a1c" />
          <path d="M7 11l10-3v18L7 24z" fill="#ebe4e0" />
        </Glyph>
      </TaskButton>
      <TaskButton $w={61} $ml={16} $open $pt={2}>
        <Glyph width={36} height={36} viewBox="0 0 36 36">
          <path d="M17 6C7 7 0 16 1 25c.8 7 7 5 8 2 1.500-3.500 5-2 5 1 .5 5 4 6 8 5 8-2 11-11 10-17C31 9 25 5 17 6z" fill="#a9d3ee" stroke="#6a9cc0" />
          <circle cx={7} cy={19} r={3.200} fill="#e24634" /><circle cx={12} cy={13} r={3.200} fill="#48a843" /><circle cx={20} cy={10} r={3.200} fill="#f5b21c" />
          <path d="M28 8l3 1-10 25-2-1z" fill="#e98b2a" /><path d="M28 8c-1-4 1-7 4-8 3 2 4 6-1 9z" fill="#9c6b3c" />
        </Glyph>
      </TaskButton>
      <TaskButton $w={73} $ml={8} $active $pt={1}>
        <AppBadge $w={34} $h={34}><TableauMark size={28} weight={1} /></AppBadge>
      </TaskButton>
      <Weather>
        <Glyph width={30} height={30} viewBox="0 0 30 30">
          <defs><linearGradient id="sun" x1="0" y1="0" x2="0.6" y2="1"><stop offset="0" stopColor="#ffd33d" /><stop offset="1" stopColor="#f59a1b" /></linearGradient></defs>
          <circle cx={14} cy={15} r={14} fill="url(#sun)" />
          <path d="M14 23.500c-5 0-5.500-6-1-6.500 0-6 8-7 9.500-1.500 3-1 7 .5 7 4 0 2.500-2 4-4 4z" fill="#d4edfc" stroke="#a8d4f0" strokeWidth={0.6} />
        </Glyph>
        <span>25°C</span>
      </Weather>
      <Glyph $ml={15} width={18} height={10} {...k} strokeWidth={1.6}><path d="M.7 9.500L9 1l8.300 8.500" /></Glyph>
      <Glyph $ml={15} width={24} height={17} viewBox="0 0 24 17">
        <path d="M5 16C-.5 16-.5 8.500 4.500 7.500 6-1 16-1 18 6c6 0 7 8 1.500 10z" fill="#999" stroke="#222" strokeWidth={1.400} /><path d="M4 15.300l9-6.500 8.500 4-2 2.500z" fill="#eee" />
      </Glyph>
      <Glyph $ml={13} width={24} height={14} {...k}><path d="M.7.7h20v12.600h-20zM22.700 4v6" /><path d="M2.500 2.500h9v9h-9z" fill="#000" stroke="none" /></Glyph>
      <Glyph $ml={15} $mt={3} width={20} height={20} {...k}><path d="M1 19C1 9 9 1.500 19 1M5.500 19C5.500 11.500 11.500 6 19 5.700M10 19c0-5 4-8.500 9-8.700" /><path d="M14.500 19c0-2.500 2-4 4-4" /><circle cx={18} cy={18.500} r={1.500} fill="#111" stroke="none" /></Glyph>
      <Glyph $ml={13} width={23} height={18} {...k}><path d="M.7 6h3.800l5-5v16l-5-5H.7z" /><path d="M12.500 6c1.300 1.700 1.300 4.300 0 6" /><path d="M15.500 3.500c3 3 3 8 0 11M18.500 1c4.500 4.500 4.500 11.500 0 16" stroke="#888" /></Glyph>
      <Glyph $ml={10} width={24} height={24} fill="none" stroke="#555" strokeWidth={1.400}><circle cx={12} cy={12} r={11.200} fill="#e9e9ea" /><path d="M7 7l10 10M17 7L7 17" strokeWidth={1.800} /></Glyph>
      <Clock><span>오후 6:52</span><span>2021-06-29</span></Clock>
      <Glyph $ml={26} $mt={11} width={37} height={37} viewBox="0 0 37 37">
        <path d="M0 0h24v19H13.500l-4.500 5v-5H0z" fill="#000" /><path d="M5 5h14M5 9.500h14M5 14h8" stroke="#ddd" strokeWidth={1.400} />
        <circle cx={24.500} cy={24} r={11.800} fill="#d5d3d5" fillOpacity={0.9} stroke="#666" />
        <text x={24.500} y={30} textAnchor="middle" fontSize={17} fontWeight={600}>1</text>
      </Glyph>
      <DesktopEdge />
    </Taskbar>
  );
}

export default function App() {
  return (
    <Shell>
      <GlobalStyle />
      <TitleBar>
        <AppBadge $w={21} $h={20}><TableauMark size={17} /></AppBadge>
        <TitleText>Tableau Public - 문서1</TitleText>
        <Glyph $mt={-1} width={15} height={1}><path d="M0 .5h15" stroke="#000" /></Glyph>
        <Glyph $ml={54} $mt={-1} width={15} height={15} fill="none" stroke="#000" strokeWidth={1.100}><path d="M.5 3.500h11v11H.5zM3.500 3.500v-3h11v11h-3" /></Glyph>
        <Glyph $ml={56} $mt={-1} width={15} height={15} stroke="#000" strokeWidth={1.200}><path d="M0 0l15 15M15 0L0 15" /></Glyph>
      </TitleBar>
      <MenuBar>{menus.map(([m, w]) => <MenuItem key={m} $w={w}>{m}</MenuItem>)}</MenuBar>
      <MainToolbar />
      <Work>
        <LeftPane />
        <CardColumn />
        <SheetArea />
      </Work>
      <Bottom />
      <WindowsTaskbar />
    </Shell>
  );
}
